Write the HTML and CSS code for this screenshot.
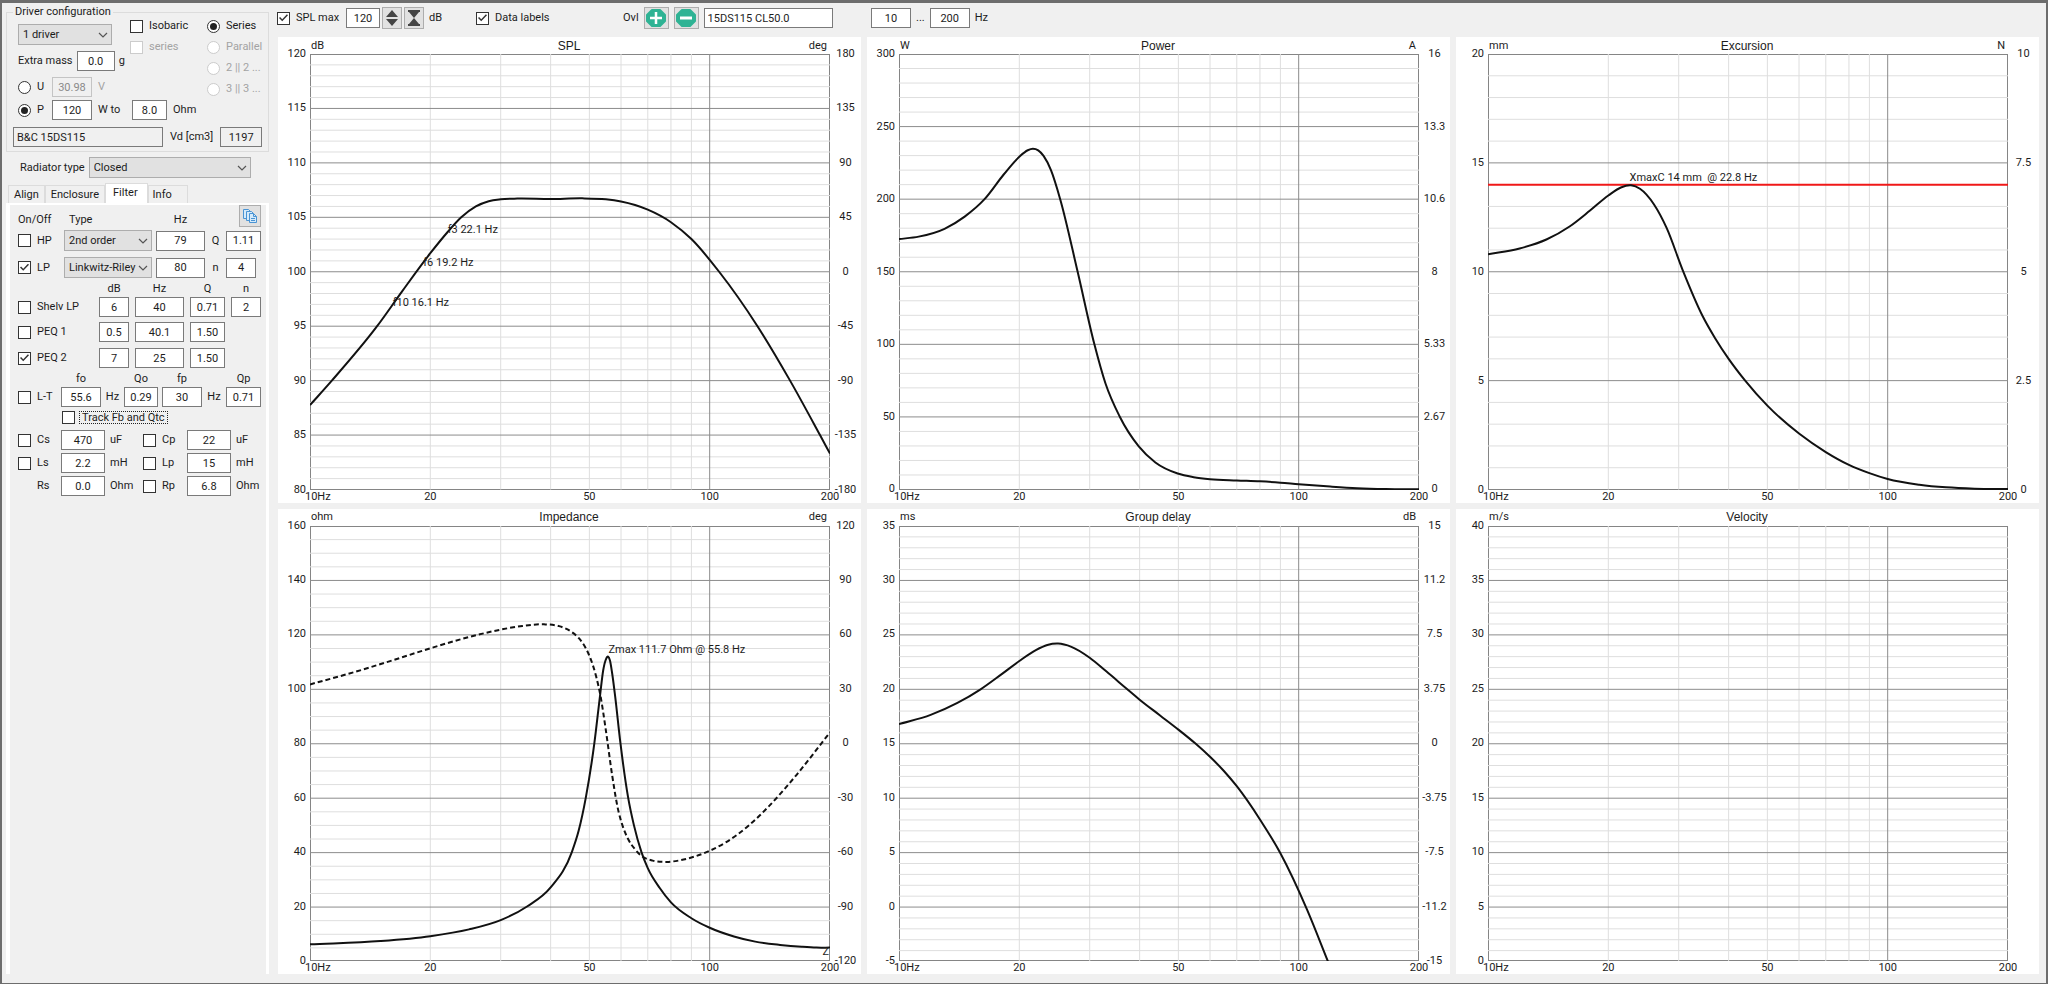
FILE: index.html
```html
<!DOCTYPE html>
<html lang="en">
<head>
<meta charset="utf-8">
<title>Driver simulation</title>
<link rel="stylesheet" href="styles.css">
</head>
<body>
<svg class="defs" aria-hidden="true">
  <symbol id="chev" viewBox="0 0 10 6"><path d="M1 1l4 4 4-4" fill="none" stroke="#555" stroke-width="1.2"/></symbol>
</svg>
<div class="window">
  <aside class="side">
    <fieldset class="group">
      <legend>Driver configuration</legend>
      <div class="config">
        <div class="config-left">
          <div class="combo w94"><select aria-label="Driver count"><option>1 driver</option></select><svg><use href="#chev"/></svg></div>
          <div class="line mass"><label for="mass">Extra mass</label><input class="w38" id="mass" type="text" value="0.0"><span>g</span></div>
        </div>
        <div class="config-mid">
          <label class="tick"><input type="checkbox">Isobaric</label>
          <label class="tick off"><input type="checkbox" disabled>series</label>
        </div>
        <div class="config-right">
          <label class="tick"><input type="radio" name="wiring" checked>Series</label>
          <label class="tick off"><input type="radio" name="wiring" disabled>Parallel</label>
          <label class="tick off"><input type="radio" name="wiring" disabled>2 || 2 ...</label>
          <label class="tick off"><input type="radio" name="wiring" disabled>3 || 3 ...</label>
        </div>
      </div>
      <div class="drive">
        <label class="tick"><input type="radio" name="drive">U</label>
        <input class="w40" type="text" aria-label="Voltage" value="30.98" disabled>
        <span class="off unit">V</span>
      </div>
      <div class="drive">
        <label class="tick"><input type="radio" name="drive" checked>P</label>
        <input class="w40" type="text" aria-label="Power" value="120">
        <span class="unit">W to</span>
        <input class="w35" type="text" aria-label="Load" value="8.0">
        <span class="unit">Ohm</span>
      </div>
      <div class="name-row">
        <input class="text w150" type="text" aria-label="Driver name" value="B&amp;C 15DS115" readonly>
        <label for="vd">Vd [cm3]</label>
        <input class="w42" id="vd" type="text" value="1197" readonly>
      </div>
    </fieldset>
    <div class="radiator">
      <label for="rad">Radiator type</label>
      <div class="combo w162"><select id="rad"><option>Closed</option></select><svg><use href="#chev"/></svg></div>
    </div>
    <nav class="tabs" role="tablist">
      <button role="tab">Align</button><button role="tab">Enclosure</button><button role="tab" class="active">Filter</button><button role="tab">Info</button>
    </nav>
    <section class="filter">
      <div class="row pass head">
        <span>On/Off</span><span class="type">Type</span><span class="mid">Hz</span><span></span>
        <button class="copy" aria-label="Copy filter">
          <svg viewBox="0 0 16 16"><g fill="#d5eafa" stroke="#4a94d4"><path d="M1.500 1.500h5l2 2v7h-7z"/><path d="M4.500 3.500h5l2 2v7h-7z"/><path d="M7.500 5.500h4l3 3v6h-7z"/><path d="M11.500 5.500v3h3M9 10.500h4M9 12.500h4" fill="none"/></g></svg>
        </button>
      </div>
      <div class="row pass">
        <label class="tick"><input type="checkbox">HP</label>
        <div class="combo w88"><select aria-label="HP type"><option>2nd order</option></select><svg><use href="#chev"/></svg></div>
        <input class="w49" type="text" aria-label="HP frequency" value="79"><label class="mid" for="hpq">Q</label><input class="w35" id="hpq" type="text" value="1.11">
      </div>
      <div class="row pass second">
        <label class="tick"><input type="checkbox" checked>LP</label>
        <div class="combo w88"><select aria-label="LP type"><option>Linkwitz-Riley</option></select><svg><use href="#chev"/></svg></div>
        <input class="w49" type="text" aria-label="LP frequency" value="80"><label class="mid" for="lpn">n</label><input class="w30" id="lpn" type="text" value="4">
      </div>
      <div class="row eq caption"><span></span><span class="w30">dB</span><span class="w49">Hz</span><span class="w35">Q</span><span class="w30">n</span></div>
      <div class="row eq">
        <label class="tick"><input type="checkbox">Shelv LP</label>
        <input class="w30" type="text" aria-label="Shelf gain" value="6"><input class="w49" type="text" aria-label="Shelf frequency" value="40"><input class="w35" type="text" aria-label="Shelf Q" value="0.71"><input class="w30" type="text" aria-label="Shelf order" value="2">
      </div>
      <div class="row eq spaced">
        <label class="tick"><input type="checkbox">PEQ 1</label>
        <input class="w30" type="text" aria-label="PEQ 1 gain" value="0.5"><input class="w49" type="text" aria-label="PEQ 1 frequency" value="40.1"><input class="w35" type="text" aria-label="PEQ 1 Q" value="1.50">
      </div>
      <div class="row eq">
        <label class="tick"><input type="checkbox" checked>PEQ 2</label>
        <input class="w30" type="text" aria-label="PEQ 2 gain" value="7"><input class="w49" type="text" aria-label="PEQ 2 frequency" value="25"><input class="w35" type="text" aria-label="PEQ 2 Q" value="1.50">
      </div>
      <div class="row lt caption"><span></span><span class="w40">fo</span><span></span><span class="w34">Qo</span><span class="w40">fp</span><span></span><span class="w35">Qp</span></div>
      <div class="row lt">
        <label class="tick"><input type="checkbox">L-T</label>
        <input class="w40" type="text" aria-label="fo" value="55.6"><span class="mid">Hz</span><input class="w34" type="text" aria-label="Qo" value="0.29"><input class="w40" type="text" aria-label="fp" value="30"><span class="mid">Hz</span><input class="w35" type="text" aria-label="Qp" value="0.71">
      </div>
      <div class="track"><input type="checkbox" id="track"><label for="track">Track Fb and Qtc</label></div>
      <div class="row rc">
        <label class="tick"><input type="checkbox">Cs</label><input class="w44" type="text" aria-label="Cs" value="470"><span class="unit">uF</span>
        <label class="tick"><input type="checkbox">Cp</label><input class="w44" type="text" aria-label="Cp" value="22"><span class="unit">uF</span>
      </div>
      <div class="row rc">
        <label class="tick"><input type="checkbox">Ls</label><input class="w44" type="text" aria-label="Ls" value="2.2"><span class="unit">mH</span>
        <label class="tick"><input type="checkbox">Lp</label><input class="w44" type="text" aria-label="Lp" value="15"><span class="unit">mH</span>
      </div>
      <div class="row rc">
        <label class="bare" for="rs">Rs</label><input class="w44" id="rs" type="text" value="0.0"><span class="unit">Ohm</span>
        <label class="tick"><input type="checkbox">Rp</label><input class="w44" type="text" aria-label="Rp" value="6.8"><span class="unit">Ohm</span>
      </div>
    </section>
  </aside>
  <main class="main">
    <header class="toolbar">
      <div class="set spl">
        <label class="tick"><input type="checkbox" checked>SPL max</label>
        <input class="w34" type="text" aria-label="SPL max value" value="120">
        <div class="pair">
          <button class="tool" aria-label="Expand scale"><svg viewBox="0 0 14 16"><path d="M7 0l6 7H1zM7 16l6-7H1z" fill="#444"/></svg></button>
          <button class="tool" aria-label="Compress scale"><svg viewBox="0 0 14 16"><path d="M1 0h12v2h-1L7 8 2 2H1zM1 16h12v-2h-1L7 8l-5 6H1z" fill="#444"/></svg></button>
        </div>
        <span>dB</span>
      </div>
      <label class="tick labels"><input type="checkbox" checked>Data labels</label>
      <div class="set ovl">
        <label for="ovl">Ovl</label>
        <button class="tool wide" aria-label="Add overlay"><svg viewBox="0 0 20 18"><path d="M6 1h8l5 5v6l-5 5H6l-5-5V6z" fill="#2fb394" stroke="#2fb394" stroke-width="2" stroke-linejoin="round"/><path d="M4 9h12M10 3v12" stroke="#fff" stroke-width="2.500"/></svg></button>
        <button class="tool wide" aria-label="Remove overlay"><svg viewBox="0 0 20 18"><path d="M6 1h8l5 5v6l-5 5H6l-5-5V6z" fill="#2fb394" stroke="#2fb394" stroke-width="2" stroke-linejoin="round"/><path d="M4 9h12" stroke="#fff" stroke-width="3"/></svg></button>
        <input class="text w129" id="ovl" type="text" value="15DS115 CL50.0">
      </div>
      <div class="set range">
        <input class="w40" type="text" aria-label="From frequency" value="10"><span>...</span><input class="w40" type="text" aria-label="To frequency" value="200"><span>Hz</span>
      </div>
    </header>
    <div class="charts" id="charts"></div>
  </main>
</div>
<script src="charts.js"></script>
</body>
</html>
```
FILE: styles.css
```css
* { box-sizing: border-box; }
body { margin: 0; background: #f0f0f0; color: #1c1c1c; font: 11px/14px Roboto, "Liberation Sans", sans-serif; }
.defs { display: none; }
.window { display: flex; min-height: 100vh; padding: 0 7px 9px 4px; border: solid #6d6d6d; border-width: 3px 2px 1px; }
.side { flex: none; display: flex; flex-direction: column; width: 263px; }
.main { flex: 1; min-width: 0; display: flex; flex-direction: column; margin-left: 8px; }

/* controls */
input, select, button { font: inherit; color: inherit; margin: 0; }
input[type="text"] { height: 20px; padding: 0; border: 1px solid #7a7a7a; background: #fff; text-align: center; }
input[type="text"].text { text-align: left; padding-left: 3px; }
input[type="text"]:read-only { background: #f0f0f0; }
input[type="text"]:disabled { background: #f0f0f0; border-color: #c4c4c4; color: #8a8a8a; }
.off { color: #a3a3a3; }
.tick { display: flex; align-items: center; gap: 6px; white-space: nowrap; }
input[type="checkbox"], input[type="radio"] { appearance: none; flex: none; display: grid; place-items: center; width: 13px; height: 13px; border: 1px solid #333; background: #fff; }
input[type="radio"] { border-radius: 50%; }
input[type="radio"]:checked::after { content: ""; width: 7px; height: 7px; border-radius: 50%; background: #222; }
input[type="checkbox"]:checked::after { content: ""; width: 9px; height: 8px; background: #333; clip-path: polygon(0 50%, 12% 38%, 36% 66%, 88% 4%, 100% 16%, 36% 92%); }
input[type="checkbox"]:disabled, input[type="radio"]:disabled { border-color: #ccc; }
.combo { display: grid; align-items: center; height: 21px; }
.combo > * { grid-area: 1 / 1; }
.combo select { appearance: none; width: 100%; height: 100%; padding: 0 0 0 4px; border: 1px solid #adadad; border-radius: 0; background: #e1e1e1; }
.combo svg { justify-self: end; width: 10px; height: 6px; margin-right: 4px; pointer-events: none; }
.w30 { width: 30px; } .w34 { width: 34px; } .w35 { width: 35px; } .w38 { width: 38px; }
.w40 { width: 40px; } .w42 { width: 42px; } .w44 { width: 44px; } .w49 { width: 49px; }
.w88 { width: 88px; } .w94 { width: 94px; } .w129 { width: 129px; } .w150 { width: 150px; } .w162 { width: 162px; }

/* driver configuration */
.group { margin: 2px 0 0; padding: 0 6px 4px; border: 1px solid #dcdcdc; }
.group legend { padding: 0 2px; height: 14px; }
.config { display: grid; grid-template-columns: 112px 77px 1fr; height: 58px; padding-left: 5px; }
.config-left { display: flex; flex-direction: column; gap: 6px; padding-top: 5px; }
.mass { display: flex; align-items: center; justify-content: space-between; width: 107px; }
.config-mid, .config-right { display: flex; flex-direction: column; gap: 7px; }
.drive { display: flex; align-items: center; height: 20px; margin-bottom: 3px; padding-left: 5px; }
.drive .tick { width: 34px; }
.drive .unit { width: 34px; padding-left: 6px; }
.drive .unit + .w35 { margin-left: 6px; }
.name-row { display: flex; align-items: center; justify-content: space-between; margin-top: 7px; }
.radiator { display: flex; align-items: center; gap: 4px; padding: 5px 0 0 14px; }

/* tabs */
.tabs { display: flex; align-items: flex-end; height: 25px; padding-left: 2px; }
.tabs button { height: 18px; padding: 0 5px; border: 1px solid #dcdcdc; border-bottom: 0; background: #f0f0f0; }
.tabs .active { height: 20px; padding: 0 9px 2px 7px; background: #fff; }
.tabs button:last-child { padding: 0 15px 0 4px; }
.filter { flex: 1; display: flow-root; border: solid #fff; border-width: 2px 3px 0 4px; padding: 0 4px 0 8px; }
.row { display: grid; align-items: center; height: 20px; margin-bottom: 3px; }
.pass { grid-template-columns: 46px 92px 49px 21px 35px; }
.eq { grid-template-columns: 81px 36px 55px 41px 30px; }
.lt { grid-template-columns: 43px 40px 23px 38px 40px 24px 35px; }
.rc { grid-template-columns: 43px 44px 38px 44px 44px 32px; }
.mid, .caption span { text-align: center; }
.unit { padding-left: 5px; }
.bare { padding-left: 19px; }
.head { height: 22px; align-items: end; }
.type { padding-left: 5px; }
.copy { justify-self: end; display: grid; place-items: center; width: 22px; height: 22px; padding: 0; border: 1px solid #adadad; background: #e1e1e1; }
.copy svg { width: 16px; height: 16px; }
.second { margin: 7px 0 4px; }
.caption { height: 16px; margin-bottom: 0; }
.spaced { margin: 5px 0 6px; }
.track { display: flex; align-items: center; gap: 4px; height: 14px; margin: 3px 0 6px 44px; }
.track label { padding: 0 2px; line-height: 11px; border: 1px dotted #222; }

/* toolbar */
.toolbar { display: flex; align-items: center; height: 34px; padding: 0 0 4px; }
.set { display: flex; align-items: center; }
.spl { width: 199px; gap: 5px; }
.spl .tick { width: 64px; }
.pair { display: flex; gap: 2px; margin-left: -3px; }
.tool { display: grid; place-items: center; width: 20px; height: 22px; padding: 0; border: 1px solid #adadad; background: #e1e1e1; }
.tool svg { width: 14px; height: 16px; }
.tool.wide { width: 25px; }
.tool.wide svg { width: 20px; height: 18px; }
.labels { width: 147px; }
.ovl { gap: 5px; width: 248px; }
.range { gap: 5px; }

/* charts */
.charts { flex: 1; display: grid; grid-template: 1fr 1fr / 1fr 1fr 1fr; gap: 6px; margin-left: 1px; }
.chart { display: grid; grid-template: 17px minmax(200px, 1fr) 13px / 32px minmax(0, 1fr) 31px; min-width: 0; background: #fff; }
.chart-head { grid-column: 2; display: grid; grid-template-columns: 1fr auto 1fr; align-items: center; padding: 0 3px 0 1px; }
.chart-head .right { text-align: right; }
.chart h2 { margin: 0; font: 12px/14px "Liberation Sans", Arial, sans-serif; }
.axis { display: flex; flex-direction: column; justify-content: space-between; margin: -6px 0; line-height: 12px; }
.axis.left { grid-area: 2 / 1; align-items: flex-end; padding-right: 4px; }
.axis.right { grid-area: 2 / 3; align-items: center; }
.plot { grid-area: 2 / 2; position: relative; }
.plot svg { position: absolute; inset: 0; width: 100%; height: 100%; overflow: hidden; }
.plot line, .plot path { vector-effect: non-scaling-stroke; fill: none; }
.minor { stroke: #dedede; shape-rendering: crispEdges; }
.major { stroke: #8c8c8c; shape-rendering: crispEdges; }
.frame { position: absolute; inset: 0; border: 1px solid #858585; }
.curve { stroke: #111; stroke-width: 2; }
.dashed { stroke-dasharray: 5 3; }
.plot .limit { stroke: #f01818; stroke-width: 2; }
.note { position: absolute; line-height: 12px; margin-top: -6px; white-space: pre; }
.note.end { right: 1px; }
.freq { grid-area: 3 / 2; position: relative; }
.freq span { position: absolute; top: 1px; line-height: 12px; transform: translateX(-50%); }
.freq span:first-child { transform: none; margin-left: -5px; }
```
FILE: charts.js
```javascript
const F_MIN = 10, F_MAX = 200, SIZE = 1000;

const charts = [
  { title: 'SPL', units: ['dB', 'deg'], min: 80, max: 120, sub: 5,
    left: [120, 115, 110, 105, 100, 95, 90, 85, 80], right: [180, 135, 90, 45, 0, -45, -90, -135, -180],
    curves: [{ data: [[10,87.75],[11.34,90],[14.72,95],[17,98.2],[20,101.7],[22.1,103.65],[23.9,105],[26,106],[28,106.48],[30,106.65],[33,106.72],[40,106.68],[48,106.74],[55,106.65],[60,106.45],[70,105.7],[80,104.55],[90,103],[105.6,100],[131.7,95],[158.9,90],[188.8,85],[200,83.3]] }],
    notes: [{ f: 22.1, v: 103.8, text: 'f3 22.1 Hz' }, { f: 19.2, v: 100.8, text: 'f6 19.2 Hz' }, { f: 16.1, v: 97.1, text: 'f10 16.1 Hz' }] },
  { title: 'Power', units: ['W', 'A'], min: 0, max: 300, sub: 5,
    left: [300, 250, 200, 150, 100, 50, 0], right: ['16', '13.3', '10.6', '8', '5.33', '2.67', '0'],
    curves: [{ data: [[10,172.5],[11.2,174.2],[13,179.6],[14.6,188],[16.37,200],[18.28,217],[20,229.2],[21,233.7],[21.63,234.7],[22.3,233.6],[23,229.8],[24,220],[25.31,200],[27.97,150.3],[30.81,100.2],[32.86,73],[35.65,50.3],[39.8,29.7],[43.8,18.6],[49.8,11],[54.6,8.5],[60,7.1],[70,6.2],[80,5.6],[90,4.7],[100,3.6],[120,2],[140,0.9],[165,0.3],[200,0.1]] }] },
  { title: 'Excursion', units: ['mm', 'N'], min: 0, max: 20, sub: 5,
    left: [20, 15, 10, 5, 0], right: ['10', '7.5', '5', '2.5', '0'], limit: 14,
    curves: [{ data: [[10,10.8],[12,11.07],[14,11.48],[16,12.08],[18,12.81],[20,13.5],[21.5,13.87],[22.8,13.97],[24,13.81],[26,13.1],[28,12],[30.66,10.1],[34.4,7.98],[37,6.95],[40,6],[44,5],[50,3.85],[60,2.57],[70,1.72],[80,1.13],[90,0.75],[100,0.48],[120,0.22],[140,0.1],[165,0.04],[200,0.02]] }],
    notes: [{ f: 22.6, v: 14.3, text: 'XmaxC 14 mm  @ 22.8 Hz' }] },
  { title: 'Impedance', units: ['ohm', 'deg'], min: 0, max: 160, sub: 4,
    left: [160, 140, 120, 100, 80, 60, 40, 20, 0], right: [120, 90, 60, 30, 0, -30, -60, -90, -120],
    curves: [
      { data: [[10,6.3],[15,7.5],[20,9.3],[25,11.8],[30,15.2],[35,20.3],[40,27.2],[45.2,40.2],[47,48],[49,60.3],[51.46,80.2],[53.2,98],[54.15,107],[55.1,111.3],[55.7,112],[56.3,110.6],[57,106],[58,97.5],[59.8,80.2],[62.5,60.3],[64.6,50.2],[67.5,40.2],[70,34.3],[75,27],[80,21.7],[90,15.9],[100,12.4],[115,9.2],[130,7.3],[150,6.1],[170,5.4],[185,5.1],[200,5.1]] },
      { dashed: true, min: -120, max: 120, data: [[10,32.7],[13,39.7],[16,45.8],[20,52.6],[25,58.8],[30,62.9],[34,64.9],[38.5,65.8],[42,64.8],[45,61.8],[47,58.3],[49,52.6],[50.5,46.1],[52,37],[53.3,26.5],[55,7.2],[57,-17.2],[59,-36.3],[60.5,-45],[62.5,-52.5],[65,-58.1],[68,-62.3],[72,-64.4],[78,-65.1],[84,-64.3],[90,-62.7],[100,-59],[110,-54.2],[125,-45.2],[140,-34.9],[165,-17.1],[200,6.3]] }],
    notes: [{ f: 55.8, v: 114.3, text: 'Zmax 111.7 Ohm @ 55.8 Hz' }, { end: true, v: 3.2, text: 'Z' }] },
  { title: 'Group delay', units: ['ms', 'dB'], min: -5, max: 35, sub: 5,
    left: [35, 30, 25, 20, 15, 10, 5, 0, -5], right: ['15', '11.2', '7.5', '3.75', '0', '-3.75', '-7.5', '-11.2', '-15'],
    curves: [{ data: [[10,16.8],[12,17.65],[14,18.75],[16,20],[18,21.35],[20,22.6],[22,23.6],[23.5,24.07],[25,24.2],[27,23.9],[30,22.9],[33,21.65],[37,20.1],[40,19.05],[45,17.6],[50,16.3],[55,15.06],[60,13.8],[65,12.5],[70,11.1],[80,8.05],[90,4.95],[105,-0.25],[118.4,-5]] }] },
  { title: 'Velocity', units: ['m/s', ''], min: 0, max: 40, sub: 5,
    left: [40, 35, 30, 25, 20, 15, 10, 5, 0], right: [], curves: [] }
];

const xOf = f => Math.log(f / F_MIN) / Math.log(F_MAX / F_MIN) * SIZE;
const yOf = (v, min, max) => (max - v) / (max - min) * SIZE;
const line = (cls, x1, y1, x2, y2) => `<line class="${cls}" x1="${x1}" y1="${y1}" x2="${x2}" y2="${y2}"/>`;

// Cubic through the samples; each slope is the parabola slope for uneven spacing
function smooth(points) {
  const n = points.length - 1;
  const secant = i => (points[i + 1][1] - points[i][1]) / (points[i + 1][0] - points[i][0]);
  const slope = points.map((p, i) => {
    if (i === 0) return secant(0);
    if (i === n) return secant(n - 1);
    const h0 = p[0] - points[i - 1][0], h1 = points[i + 1][0] - p[0];
    return (secant(i - 1) * h1 + secant(i) * h0) / (h0 + h1);
  });
  return points.map((p, i) => {
    if (!i) return `M${p}`;
    const q = points[i - 1], h = (p[0] - q[0]) / 3;
    return `C${q[0] + h},${q[1] + slope[i - 1] * h} ${p[0] - h},${p[1] - slope[i] * h} ${p}`;
  }).join('');
}

function drawPlot(c) {
  let out = '';
  const rows = (c.left.length - 1) * c.sub;
  for (let i = 1; i < rows; i++) if (i % c.sub) out += line('minor', 0, i * SIZE / rows, SIZE, i * SIZE / rows);
  for (const f of [20, 30, 40, 50, 60, 70, 80, 90]) out += line('minor', xOf(f), 0, xOf(f), SIZE);
  for (let i = c.sub; i < rows; i += c.sub) out += line('major', 0, i * SIZE / rows, SIZE, i * SIZE / rows);
  out += line('major', xOf(100), 0, xOf(100), SIZE);
  if (c.limit) out += line('limit', 0, yOf(c.limit, c.min, c.max), SIZE, yOf(c.limit, c.min, c.max));
  for (const k of c.curves) {
    const pts = k.data.map(([f, v]) => [xOf(f), yOf(v, k.min ?? c.min, k.max ?? c.max)]);
    out += `<path class="curve${k.dashed ? ' dashed' : ''}" d="${smooth(pts)}"/>`;
  }
  return out;
}

const spans = list => list.map(t => `<span>${t}</span>`).join('');
const note = (n, c) => {
  const top = yOf(n.v, c.min, c.max) / 10;
  return n.end ? `<span class="note end" style="top:${top}%">${n.text}</span>`
    : `<span class="note" style="top:${top}%;left:${xOf(n.f) / 10}%">${n.text}</span>`;
};

document.getElementById('charts').innerHTML = charts.map(c => `
  <section class="chart">
    <div class="chart-head"><span>${c.units[0]}</span><h2>${c.title}</h2><span class="right">${c.units[1]}</span></div>
    <div class="axis left">${spans(c.left)}</div>
    <div class="plot"><div class="frame"></div><svg viewBox="0 0 ${SIZE} ${SIZE}" preserveAspectRatio="none">${drawPlot(c)}</svg>${(c.notes || []).map(n => note(n, c)).join('')}</div>
    <div class="axis right">${spans(c.right)}</div>
    <div class="freq">${[10, 20, 50, 100, 200].map(f => `<span style="left:${xOf(f) / 10}%">${f}${f === 10 ? 'Hz' : ''}</span>`).join('')}</div>
  </section>`).join('');
```
